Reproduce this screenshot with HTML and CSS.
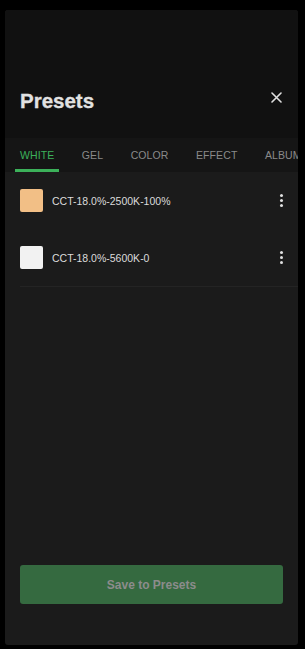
FILE: index.html
```html
<!DOCTYPE html>
<html lang="en">
<head>
  <meta charset="UTF-8">
  <meta name="viewport" content="width=device-width, initial-scale=1.0">
  <title>Presets</title>
  <link rel="stylesheet" href="styles.css">
</head>
<body>
<div class="panel">
  <div class="panel-header">
    <h2>Presets</h2>
    <button class="close-btn" aria-label="Close">
      <svg width="11" height="11" viewBox="0 0 11 11"><path d="M1 1L10 10M10 1L1 10" stroke="#e0e0e0" stroke-width="1.6" stroke-linecap="round"/></svg>
    </button>
  </div>
  <div class="tabs">
    <div class="tab active">WHITE</div>
    <div class="tab">GEL</div>
    <div class="tab">COLOR</div>
    <div class="tab">EFFECT</div>
    <div class="tab">ALBUM</div>
  </div>
  <div class="preset-list">
    <div class="preset-row">
      <span class="swatch" style="background:#f2bf86"></span>
      <span class="preset-name">CCT-18.0%-2500K-100%</span>
      <span class="kebab"><i></i><i></i><i></i></span>
    </div>
    <div class="preset-row">
      <span class="swatch" style="background:#f2f2f2"></span>
      <span class="preset-name">CCT-18.0%-5600K-0</span>
      <span class="kebab"><i></i><i></i><i></i></span>
    </div>
  </div>
  <div class="footer">
    <button class="save-btn">Save to Presets</button>
  </div>
</div>
</body>
</html>
```

FILE: styles.css
```css
body {
  margin: 0;
  padding: 0;
  background-color: #000;
  font-family: "Liberation Sans", Arial, sans-serif;
  height: 649px;
  overflow: hidden;
}

.panel {
  margin: 10px 0 0 5px;
  width: 293px;
  height: 635px;
  border-radius: 3px;
  background-color: #1b1b1b;
  display: flex;
  flex-direction: column;
  overflow: hidden;
}

.panel-header {
  background-color: #111;
  height: 128px;
  display: flex;
  align-items: center;
  justify-content: space-between;
  padding: 54px 15px 0 15px;
  box-sizing: border-box;
}

.panel-header h2 {
  margin: 0;
  font-size: 20.5px;
  font-weight: bold;
  color: #e2e2e2;
  line-height: 24px;
  -webkit-text-stroke: 0.3px #e2e2e2;
}

.close-btn {
  background: none;
  border: none;
  padding: 0;
  margin-bottom: 8px;
  margin-right: 1px;
  width: 11px;
  height: 11px;
  display: flex;
}

.tabs {
  background-color: #151515;
  height: 34px;
  display: flex;
  padding-left: 10px;
  white-space: nowrap;
}

.tab {
  font-size: 10.5px;
  color: #8a8a8a;
  padding: 0 5px;
  line-height: 34px;
  margin-right: 17.5px;
  position: relative;
  letter-spacing: 0.1px;
}

.tab.active {
  color: #3cb15a;
}

.tab.active::after {
  content: "";
  position: absolute;
  left: 0;
  right: 0;
  bottom: 0;
  height: 3px;
  background-color: #3cb15a;
}

.preset-list {
  flex: 1;
  padding-left: 15px;
}

.preset-row {
  display: flex;
  align-items: center;
  height: 57px;
}

.preset-row:last-child {
  border-bottom: 1px solid #242424;
}

.swatch {
  width: 23px;
  height: 23px;
  border-radius: 2px;
  margin-right: 9px;
}

.preset-name {
  flex: 1;
  font-size: 10.5px;
  color: #dcdcdc;
}

.kebab {
  display: flex;
  flex-direction: column;
  gap: 2px;
  width: 3px;
  margin-right: 15px;
}

.kebab i {
  display: block;
  width: 3px;
  height: 3px;
  border-radius: 50%;
  background-color: #e0e0e0;
}

.footer {
  padding: 0 15px 41px 15px;
}

.save-btn {
  width: 100%;
  height: 39px;
  border: none;
  border-radius: 3px;
  background-color: #356a40;
  color: #8c8c8c;
  font-family: "Liberation Sans", Arial, sans-serif;
  font-size: 12px;
  font-weight: bold;
}
```
